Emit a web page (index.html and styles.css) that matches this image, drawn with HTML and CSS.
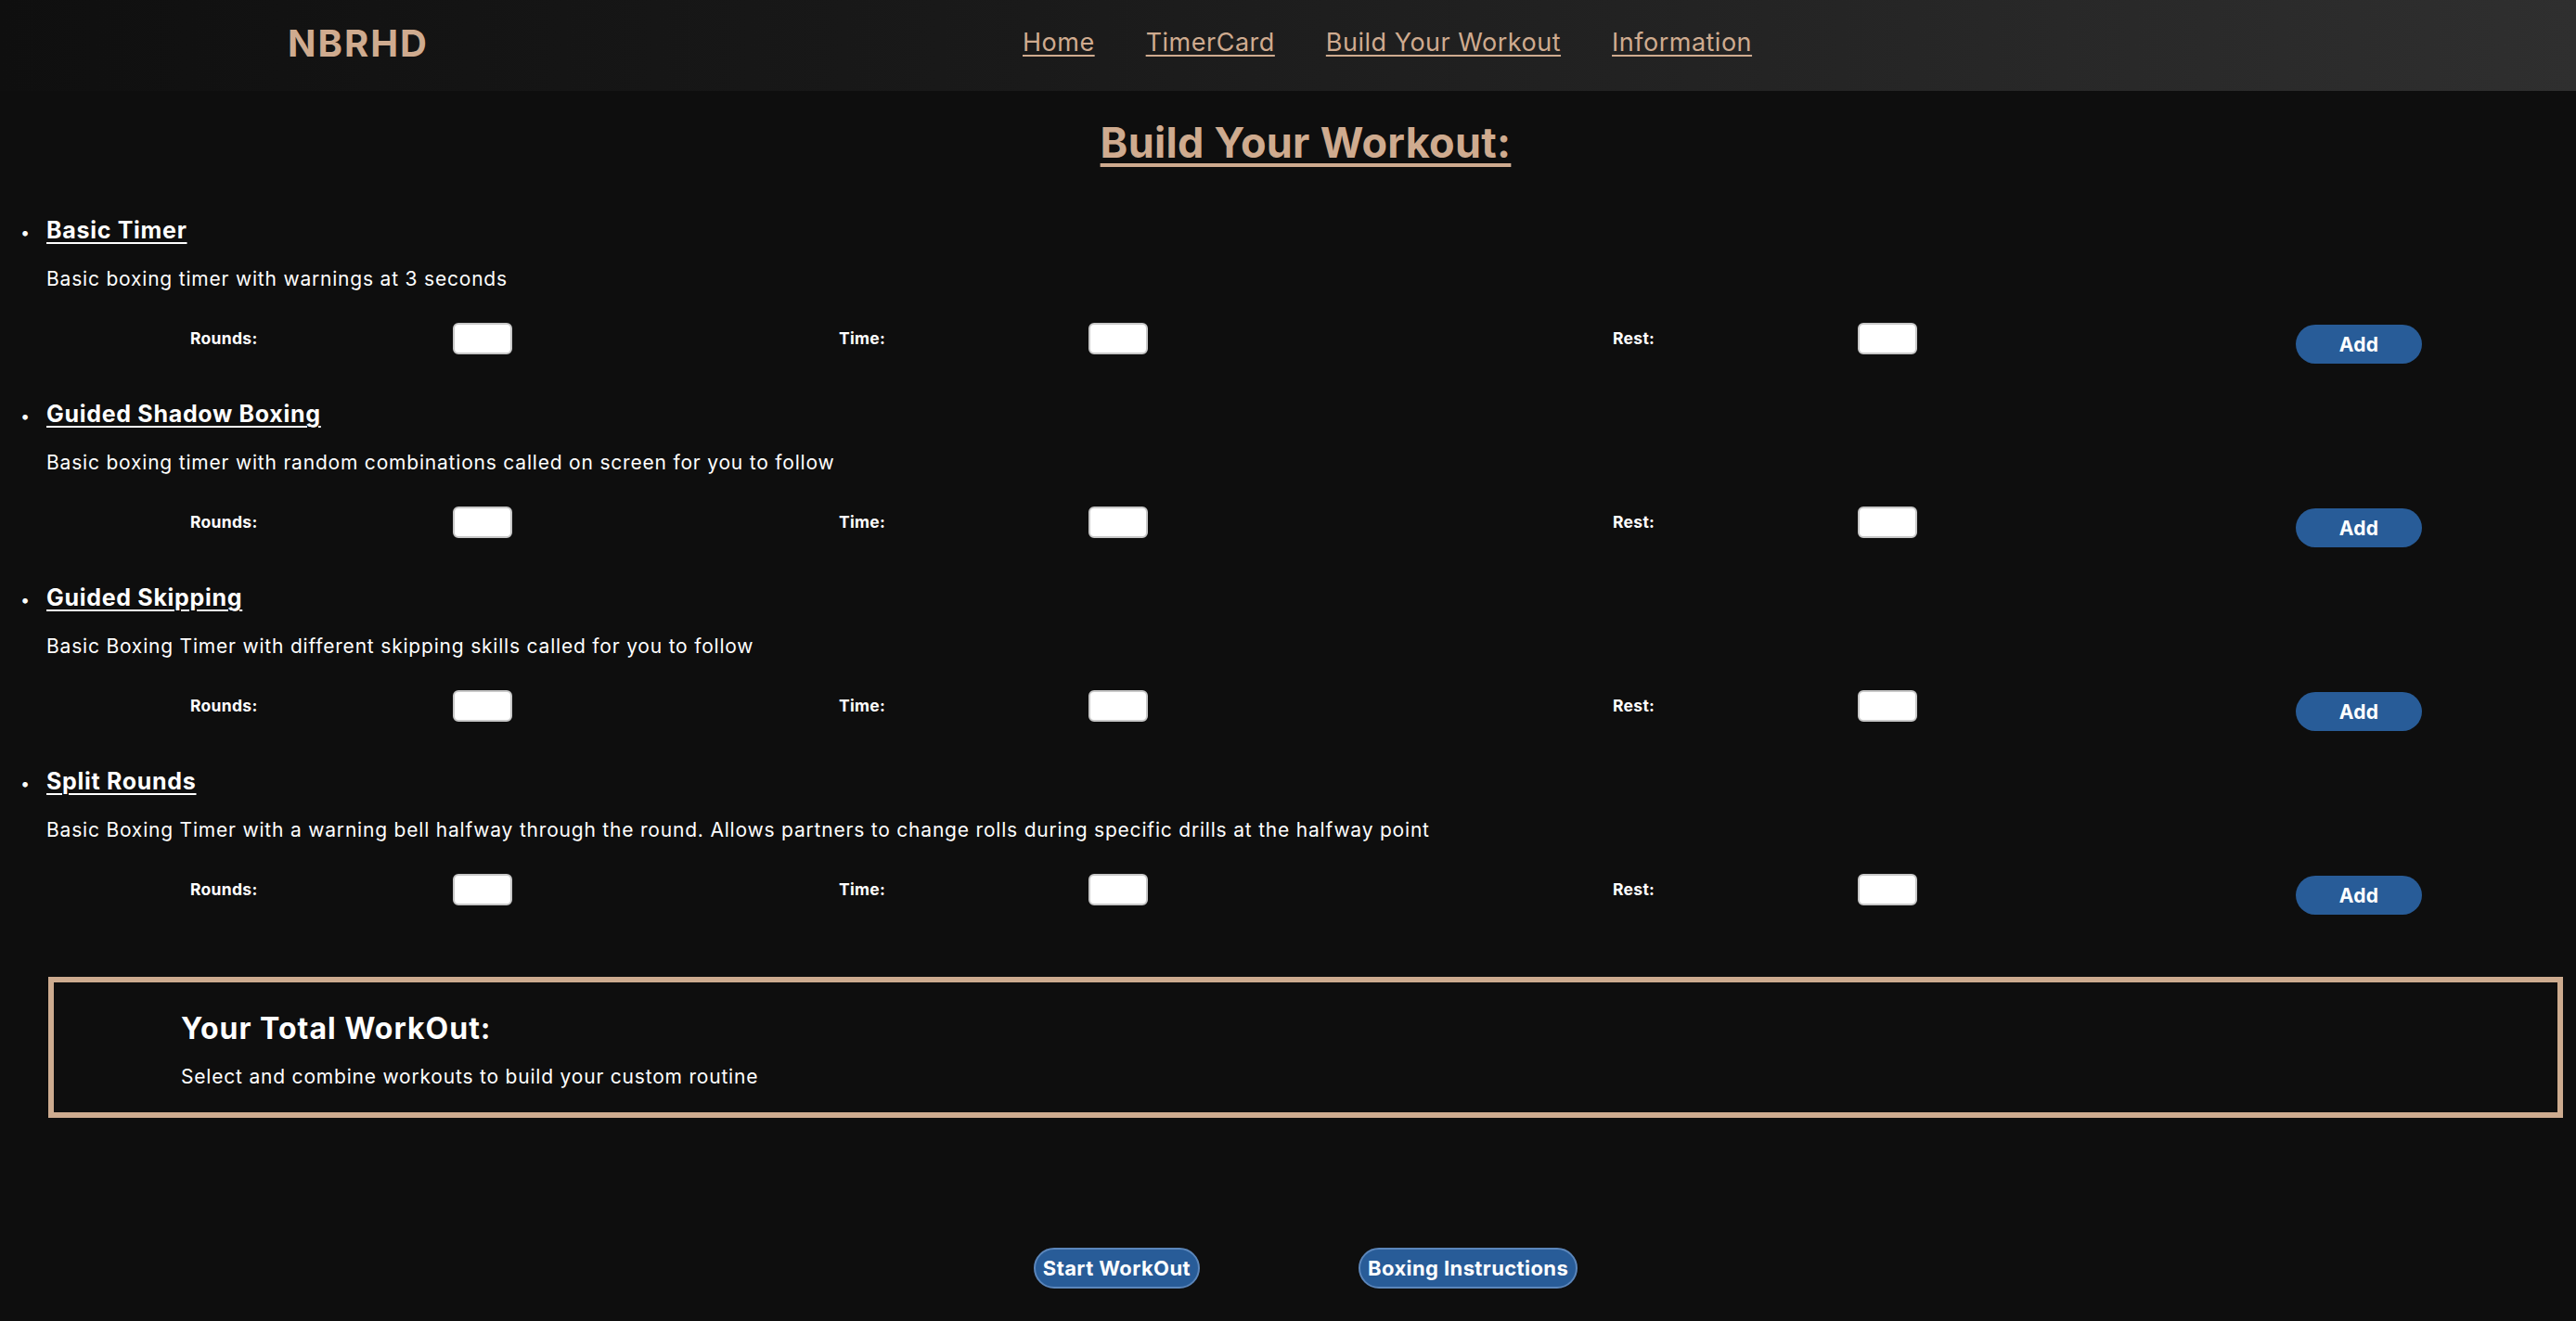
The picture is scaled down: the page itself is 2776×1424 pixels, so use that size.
FILE: index.html
```html
<!DOCTYPE html>
<html lang="en">
<head>
<meta charset="utf-8">
<title>NBRHD - Build Your Workout</title>
<link rel="stylesheet" href="styles.css">
</head>
<body>
<header class="topbar">
  <div class="logo">NBRHD</div>
  <nav class="nav">
    <a href="#" class="nav-link">Home</a>
    <a href="#" class="nav-link">TimerCard</a>
    <a href="#" class="nav-link">Build Your Workout</a>
    <a href="#" class="nav-link">Information</a>
  </nav>
</header>

<main>
  <h1 class="page-title">Build Your Workout:</h1>

  <ul class="workouts">
    <li class="workout">
      <h3 class="workout-title">Basic Timer</h3>
      <p class="workout-desc">Basic boxing timer with warnings at 3 seconds</p>
      <div class="workout-row">
        <label class="field-label">Rounds:</label><input class="field" type="text">
        <label class="field-label">Time:</label><input class="field" type="text">
        <label class="field-label">Rest:</label><input class="field" type="text">
        <button class="add-btn">Add</button>
      </div>
    </li>
    <li class="workout">
      <h3 class="workout-title">Guided Shadow Boxing</h3>
      <p class="workout-desc">Basic boxing timer with random combinations called on screen for you to follow</p>
      <div class="workout-row">
        <label class="field-label">Rounds:</label><input class="field" type="text">
        <label class="field-label">Time:</label><input class="field" type="text">
        <label class="field-label">Rest:</label><input class="field" type="text">
        <button class="add-btn">Add</button>
      </div>
    </li>
    <li class="workout">
      <h3 class="workout-title">Guided Skipping</h3>
      <p class="workout-desc">Basic Boxing Timer with different skipping skills called for you to follow</p>
      <div class="workout-row">
        <label class="field-label">Rounds:</label><input class="field" type="text">
        <label class="field-label">Time:</label><input class="field" type="text">
        <label class="field-label">Rest:</label><input class="field" type="text">
        <button class="add-btn">Add</button>
      </div>
    </li>
    <li class="workout">
      <h3 class="workout-title">Split Rounds</h3>
      <p class="workout-desc">Basic Boxing Timer with a warning bell halfway through the round. Allows partners to change rolls during specific drills at the halfway point</p>
      <div class="workout-row">
        <label class="field-label">Rounds:</label><input class="field" type="text">
        <label class="field-label">Time:</label><input class="field" type="text">
        <label class="field-label">Rest:</label><input class="field" type="text">
        <button class="add-btn">Add</button>
      </div>
    </li>
  </ul>

  <section class="total">
    <h2 class="total-title">Your Total WorkOut:</h2>
    <p class="total-desc">Select and combine workouts to build your custom routine</p>
  </section>

  <div class="actions">
    <button class="action-btn">Start WorkOut</button>
    <button class="action-btn">Boxing Instructions</button>
  </div>
</main>
</body>
</html>
```

FILE: styles.css
```css
* { box-sizing: border-box; }

html, body {
  margin: 0;
  padding: 0;
  background: #0e0e0e;
  color: #ffffff;
  font-family: Inter, "Open Sans", "Liberation Sans", sans-serif;
}

.topbar {
  height: 98px;
  display: flex;
  align-items: flex-start;
  padding-left: 310px;
  background: linear-gradient(90deg, #0f0f0f 0%, #1a1a1a 40%, #2f2f2f 100%);
}

.logo {
  width: 792px;
  padding-top: 25px;
  font-size: 40px;
  line-height: 44px;
  font-weight: 700;
  color: #cfab8f;
  letter-spacing: 2px;
}

.nav {
  display: flex;
  gap: 55px;
  padding-top: 29px;
}

.nav-link {
  color: #cfab8f;
  font-size: 27px;
  line-height: 34px;
  font-weight: 400;
  letter-spacing: 0.5px;
  text-decoration: underline;
  text-decoration-thickness: 2px;
  text-underline-offset: 4px;
}

.page-title {
  margin: 0;
  padding: 30px 0 0 38px;
  text-align: center;
  font-size: 45px;
  line-height: 52px;
  font-weight: 700;
  color: #cfab8f;
  letter-spacing: 0.3px;
  text-decoration: underline;
  text-decoration-thickness: 4px;
  text-underline-offset: 6px;
}

.workouts {
  margin: 0;
  padding: 0 0 0 50px;
}

.workout {
  margin-top: 39px;
  list-style: disc;
}
.workout:first-child { margin-top: 53px; }
.workout::marker {
  content: "\2022\2003";
  font-size: 18px;
}

.workout-title {
  margin: 0;
  font-size: 25px;
  line-height: 30px;
  font-weight: 700;
  letter-spacing: 0.7px;
  text-decoration: underline;
  text-decoration-thickness: 2px;
  text-underline-offset: 4px;
}

.workout-desc {
  margin: 25px 0 0;
  font-size: 21px;
  line-height: 26px;
  font-weight: 400;
  letter-spacing: 0.8px;
}

.workout-row {
  margin-top: 34px;
  padding-left: 155px;
  display: grid;
  grid-template-columns: 283px 416px 269px 565px 264px 472px 136px;
  align-items: start;
}

.field-label {
  font-size: 17.5px;
  line-height: 34px;
  font-weight: 700;
  letter-spacing: 0.3px;
}

.field {
  width: 64px;
  height: 34px;
  border: 2px solid #c8c8c8;
  border-radius: 6px;
  background: #ffffff;
}

.add-btn {
  margin-top: 2px;
  width: 136px;
  height: 42px;
  border: none;
  border-radius: 21px;
  background: #285c98;
  color: #ffffff;
  font-family: inherit;
  font-size: 21px;
  font-weight: 700;
  letter-spacing: 0.3px;
}

.total {
  margin: 67px 14px 0 52px;
  border: 6px solid #cdab8f;
  height: 152px;
  padding: 30px 0 0 137px;
}

.total-title {
  margin: 0;
  font-size: 32px;
  line-height: 40px;
  font-weight: 700;
  letter-spacing: 1px;
}

.total-desc {
  margin: 20px 0 0;
  font-size: 21px;
  line-height: 24px;
  letter-spacing: 0.8px;
}

.actions {
  margin-top: 140px;
  padding-left: 38px;
  display: flex;
  justify-content: center;
  gap: 171px;
}

.action-btn {
  height: 44px;
  padding: 0 8px;
  border: 2px solid #5b86bb;
  border-radius: 22px;
  background: #285c98;
  color: #ffffff;
  font-family: inherit;
  font-size: 22px;
  font-weight: 700;
  letter-spacing: 0.4px;
}
```
